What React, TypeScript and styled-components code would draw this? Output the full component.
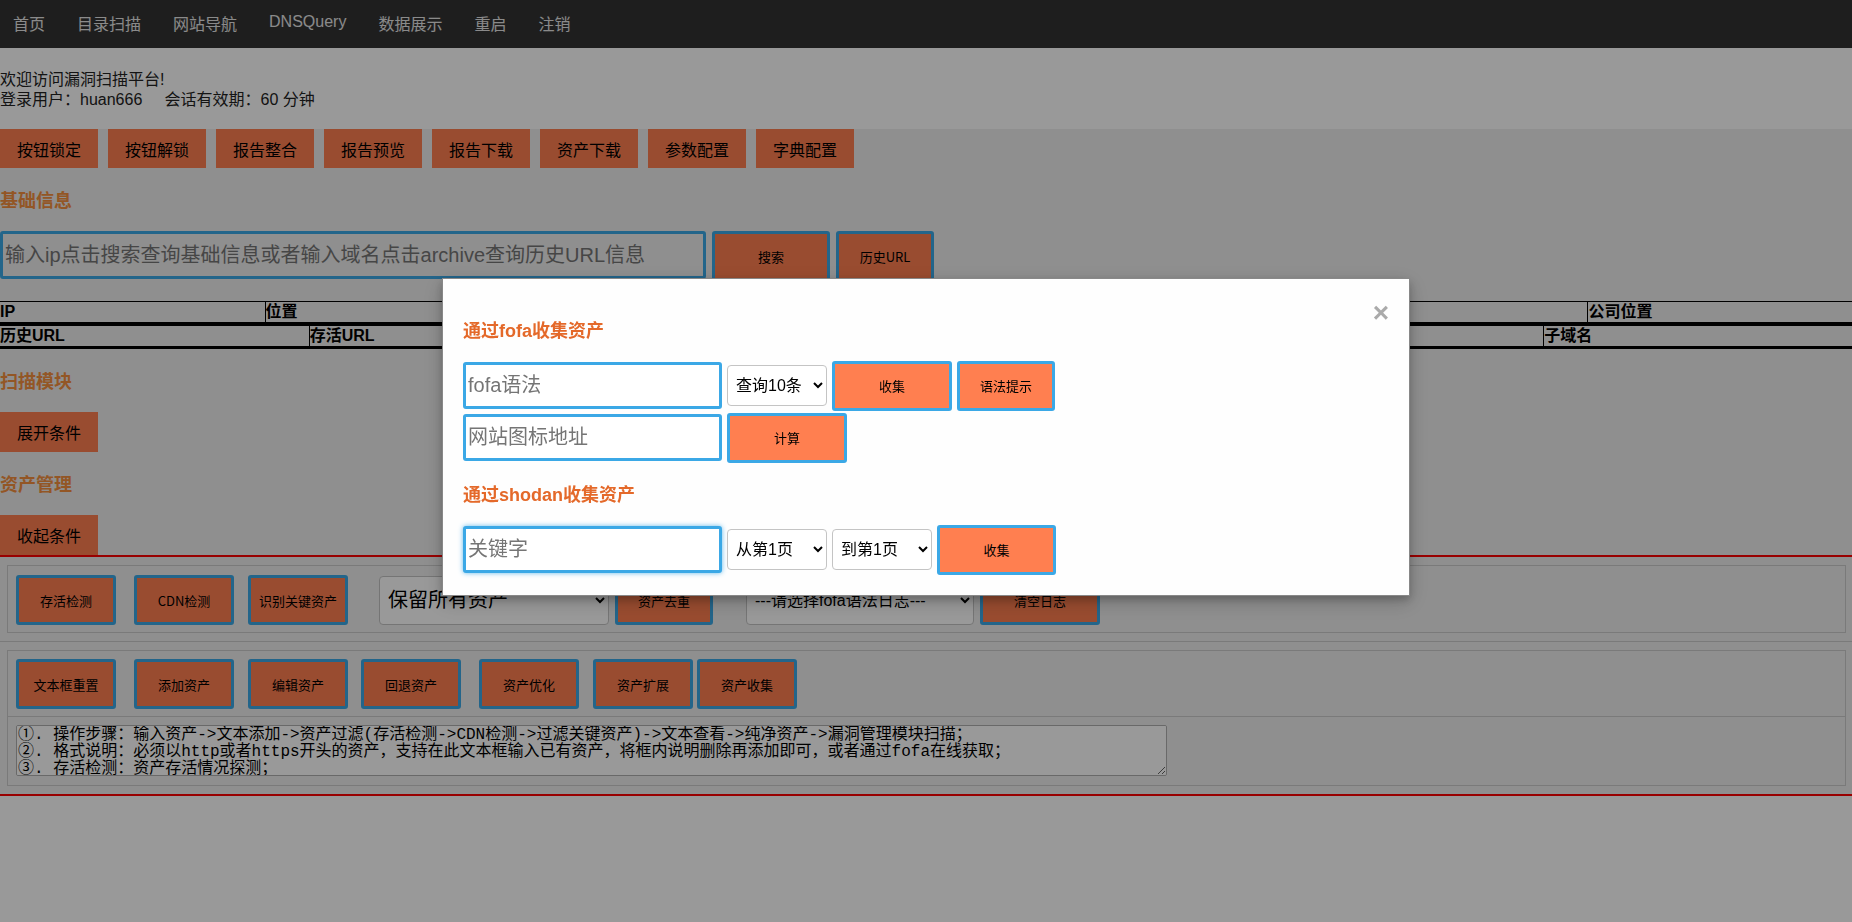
import React from 'react';
import styled, { createGlobalStyle } from 'styled-components';

const GlobalStyle = createGlobalStyle`
  html, body {
    margin: 0;
    padding: 0;
    background: #fff;
  }
  body {
    font-family: "Liberation Sans", "Noto Sans CJK SC", sans-serif;
    font-size: 16px;
    color: #222;
  }
  * {
    box-sizing: border-box;
  }
`;

const NavBar = styled.nav`
  display: flex;
  align-items: center;
  gap: 32px;
  height: 48px;
  padding: 0 13px;
  background: #333;
`;

const NavItem = styled.a<{ $raised?: boolean }>`
  color: #e6e6e6;
  font-size: 16px;
  line-height: 20px;
  text-decoration: none;
  margin-top: ${p => (p.$raised ? '0' : '2px')};
  margin-bottom: ${p => (p.$raised ? '4px' : '0')};
`;

const Welcome = styled.div`
  padding: 22px 0 19px;
  font-size: 16px;
  line-height: 20px;
  color: #222;
`;

const Content = styled.main`
  background: #eee;
`;

const Toolbar = styled.div`
  display: flex;
  gap: 10px;
`;

const FlatButton = styled.button<{ $h?: number }>`
  height: ${p => p.$h ?? 40}px;
  padding: 0 17px;
  border: none;
  background: coral;
  color: #000;
  font: 16px "Liberation Sans", "Noto Sans CJK SC", sans-serif;
  cursor: pointer;
`;

const SectionTitle = styled.h3`
  margin: 22px 0 19px;
  font-size: 18px;
  line-height: 22px;
  font-weight: bold;
  color: #f5903f;
`;

const SearchRow = styled.div`
  display: flex;
  align-items: flex-start;
  gap: 6px;
  margin-bottom: 20px;
`;

const SearchInput = styled.input`
  width: 706px;
  height: 48px;
  padding: 1px 2px;
  border: 3px solid #3ba8e6;
  border-radius: 3px;
  background: transparent;
  font: 20px "Liberation Sans", "Noto Sans CJK SC", sans-serif;
  color: #000;
`;

const ActionButton = styled.button<{ $w: number; $ml?: number }>`
  flex: none;
  width: ${p => p.$w}px;
  height: 50px;
  margin-left: ${p => p.$ml ?? 0}px;
  padding: 0;
  border: 3px solid #3ba8e6;
  border-radius: 3px;
  background: coral;
  color: #000;
  font: 13px "Noto Sans CJK SC", "Liberation Sans", sans-serif;
  cursor: pointer;
`;

const InfoTable = styled.table`
  width: 100%;
  table-layout: fixed;
  border-collapse: separate;
  border-spacing: 0;
  border-top: 1px solid #000;
  border-bottom: 3px solid #000;
`;

const Cell = styled.td`
  height: 20px;
  padding: 0;
  font-size: 16px;
  line-height: 20px;
  font-weight: bold;
  color: #000;
  white-space: nowrap;
  overflow: hidden;
  & + & {
    border-left: 1px solid #000;
  }
`;

const AssetSection = styled.section`
  border-top: 2px solid red;
  border-bottom: 2px solid red;
`;

const PanelWrap = styled.div<{ $divider?: boolean }>`
  padding: 8px 6px 8px 7px;
  border-bottom: ${p => (p.$divider ? '1px solid #ccc' : 'none')};
`;

const Panel = styled.div`
  border: 1px solid #ccc;
`;

const PanelRow = styled.div<{ $pad: string; $divider?: boolean }>`
  display: flex;
  align-items: center;
  padding: ${p => p.$pad};
  border-top: ${p => (p.$divider ? '1px solid #ccc' : 'none')};
`;

const AppSelect = styled.select<{ $w: number; $h: number; $fs: number; $ml?: number }>`
  flex: none;
  width: ${p => p.$w}px;
  height: ${p => p.$h}px;
  margin-left: ${p => p.$ml ?? 0}px;
  padding: 0 4px;
  border: 1px solid #c4c4c4;
  border-radius: 4px;
  background: #fff;
  color: #000;
  font: ${p => p.$fs}px "Liberation Sans", "Noto Sans CJK SC", sans-serif;
`;

const Notes = styled.textarea`
  width: 1151px;
  height: 51px;
  padding: 1px;
  border: 1px solid #b0b0b0;
  border-radius: 2px;
  background: #fff;
  color: #000;
  font: 16px/17px "Liberation Mono", "Noto Sans CJK SC", monospace;
  overflow-y: scroll;

  &::-webkit-scrollbar {
    width: 14px;
  }
  &::-webkit-scrollbar-track {
    background: #f6f6f6;
  }
  &::-webkit-scrollbar-thumb {
    background: #c8c8c8;
    border: 3px solid #f6f6f6;
    border-radius: 7px;
  }
`;

const Overlay = styled.div`
  position: fixed;
  inset: 0;
  z-index: 10;
  overflow: auto;
  background: rgba(0, 0, 0, 0.4);
`;

const Modal = styled.div`
  box-sizing: content-box;
  width: 50%;
  margin: 15% auto 0;
  padding: 20px;
  border: 1px solid #888;
  background: #fefefe;
  box-shadow: 0 4px 8px rgba(0, 0, 0, 0.2), 0 6px 20px rgba(0, 0, 0, 0.19);
`;

const Close = styled.span`
  float: right;
  color: #aaa;
  font: bold 28px/28px "Liberation Sans", sans-serif;
  cursor: pointer;
`;

const ModalTitle = styled.h3`
  margin: 21px 0 19px;
  font-size: 18px;
  line-height: 22px;
  font-weight: bold;
  color: #e4692a;
`;

const FormStack = styled.div`
  display: flex;
  flex-direction: column;
  gap: 2px;
`;

const FormRow = styled.div`
  display: flex;
  align-items: center;
  gap: 5px;
  height: 50px;
`;

const ModalInput = styled.input`
  width: 259px;
  height: 47px;
  padding: 1px 2px;
  border: 3px solid #3ba8e6;
  border-radius: 3px;
  background: #fff;
  color: #000;
  font: 20px "Liberation Sans", "Noto Sans CJK SC", sans-serif;
  &:focus {
    outline: none;
    box-shadow: 0 0 5px rgba(59, 168, 230, 0.8);
  }
`;

const navItems = ['首页', '目录扫描', '网站导航', 'DNSQuery', '数据展示', '重启', '注销'];
const toolbar = ['按钮锁定', '按钮解锁', '报告整合', '报告预览', '报告下载', '资产下载', '参数配置', '字典配置'];
const infoCols = ['IP', '位置', '', '', '', '', '公司位置'];
const urlCols = ['历史URL', '存活URL', '', '', '', '子域名'];

const toolButtons: [string, number][] = [
  ['文本框重置', 0],
  ['添加资产', 18],
  ['编辑资产', 14],
  ['回退资产', 13],
  ['资产优化', 18],
  ['资产扩展', 14],
  ['资产收集', 4],
];

const notes = [
  '①. 操作步骤：输入资产->文本添加->资产过滤(存活检测->CDN检测->过滤关键资产)->文本查看->纯净资产->漏洞管理模块扫描；',
  '②. 格式说明：必须以http或者https开头的资产，支持在此文本框输入已有资产，将框内说明删除再添加即可，或者通过fofa在线获取；',
  '③. 存活检测：资产存活情况探测；',
  '④. CDN检测：识别使用CDN的资产；',
  '⑤. 识别关键资产：过滤出登录、后台等关键资产；',
].join('\n');

export default function App() {
  return (
    <>
      <GlobalStyle />
      <NavBar>
        {navItems.map(n => (
          <NavItem key={n} href="#" $raised={n === 'DNSQuery'}>
            {n}
          </NavItem>
        ))}
      </NavBar>
      <Welcome>
        <div>欢迎访问漏洞扫描平台!</div>
        <div>登录用户：huan666{'\u00a0'.repeat(5)}会话有效期：60 分钟</div>
      </Welcome>
      <Content>
        <Toolbar>
          {toolbar.map(t => (
            <FlatButton key={t} $h={39}>
              {t}
            </FlatButton>
          ))}
        </Toolbar>

        <SectionTitle>基础信息</SectionTitle>
        <SearchRow>
          <SearchInput placeholder="输入ip点击搜索查询基础信息或者输入域名点击archive查询历史URL信息" />
          <ActionButton $w={118}>搜索</ActionButton>
          <ActionButton $w={98}>历史URL</ActionButton>
        </SearchRow>
        <InfoTable>
          <tbody>
            <tr>
              {infoCols.map((c, i) => (
                <Cell key={i}>{c}</Cell>
              ))}
            </tr>
          </tbody>
        </InfoTable>
        <InfoTable>
          <tbody>
            <tr>
              {urlCols.map((c, i) => (
                <Cell key={i}>{c}</Cell>
              ))}
            </tr>
          </tbody>
        </InfoTable>

        <SectionTitle>扫描模块</SectionTitle>
        <FlatButton>展开条件</FlatButton>

        <SectionTitle>资产管理</SectionTitle>
        <FlatButton>收起条件</FlatButton>

        <AssetSection>
          <PanelWrap $divider>
            <Panel>
              <PanelRow $pad="9px 8px 7px">
                <ActionButton $w={100}>存活检测</ActionButton>
                <ActionButton $w={100} $ml={18}>CDN检测</ActionButton>
                <ActionButton $w={100} $ml={14}>识别关键资产</ActionButton>
                <AppSelect $w={230} $h={49} $fs={20} $ml={31}>
                  <option>保留所有资产</option>
                  <option>仅保留关键资产</option>
                </AppSelect>
                <ActionButton $w={98} $ml={6}>资产去重</ActionButton>
                <AppSelect $w={228} $h={49} $fs={16} $ml={33}>
                  <option>---请选择fofa语法日志---</option>
                </AppSelect>
                <ActionButton $w={120} $ml={6}>清空日志</ActionButton>
              </PanelRow>
            </Panel>
          </PanelWrap>
          <PanelWrap>
            <Panel>
              <PanelRow $pad="8px 8px 7px">
                {toolButtons.map(([t, ml]) => (
                  <ActionButton key={t} $w={100} $ml={ml}>
                    {t}
                  </ActionButton>
                ))}
              </PanelRow>
              <PanelRow $pad="8px 8px 9px" $divider>
                <Notes defaultValue={notes} />
              </PanelRow>
            </Panel>
          </PanelWrap>
        </AssetSection>
      </Content>

      <Overlay>
        <Modal>
          <Close>&times;</Close>
          <ModalTitle>通过fofa收集资产</ModalTitle>
          <FormStack>
            <FormRow>
              <ModalInput placeholder="fofa语法" />
              <AppSelect $w={100} $h={41} $fs={16}>
                <option>查询10条</option>
                <option>查询100条</option>
                <option>查询1000条</option>
              </AppSelect>
              <ActionButton $w={120}>收集</ActionButton>
              <ActionButton $w={98}>语法提示</ActionButton>
            </FormRow>
            <FormRow>
              <ModalInput placeholder="网站图标地址" />
              <ActionButton $w={120}>计算</ActionButton>
            </FormRow>
          </FormStack>
          <ModalTitle>通过shodan收集资产</ModalTitle>
          <FormRow>
            <ModalInput placeholder="关键字" autoFocus />
            <AppSelect $w={100} $h={41} $fs={16}>
              <option>从第1页</option>
              <option>从第2页</option>
            </AppSelect>
            <AppSelect $w={100} $h={41} $fs={16}>
              <option>到第1页</option>
              <option>到第2页</option>
            </AppSelect>
            <ActionButton $w={119}>收集</ActionButton>
          </FormRow>
        </Modal>
      </Overlay>
    </>
  );
}
